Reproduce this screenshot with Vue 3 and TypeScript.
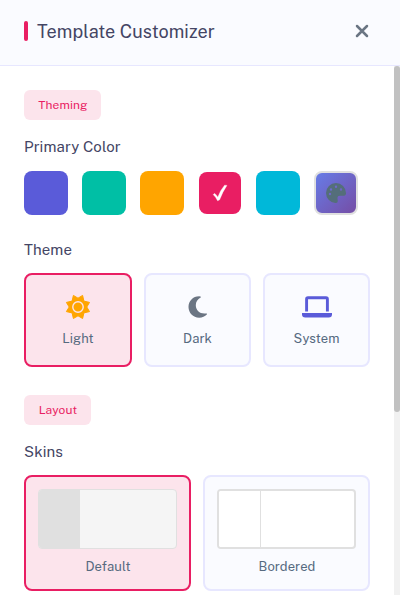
<script setup lang="ts">
import { ref } from 'vue'

interface Swatch {
  name: string
  color: string
}

const swatches: Swatch[] = [
  { name: 'indigo', color: '#5a5bd9' },
  { name: 'teal', color: '#00bfa5' },
  { name: 'orange', color: '#ffa500' },
  { name: 'pink', color: '#e91e63' },
  { name: 'cyan', color: '#00b8d9' },
]
const themes: string[] = ['Light', 'Dark', 'System']
const skins: string[] = ['Default', 'Bordered']

const primary = ref('pink')
const theme = ref('Light')
const skin = ref('Default')
</script>

<template>
  <div class="panel">
    <header class="header">
      <span class="accent"></span>
      <h1 class="title">Template Customizer</h1>
      <button class="close">
        <svg width="14" height="14" viewBox="0 0 14 14">
          <path d="M2 2 12 12M12 2 2 12" fill="none" stroke="#6a7583" stroke-width="2.5" stroke-linecap="round" />
        </svg>
      </button>
    </header>
    <div class="scroller">
      <main class="body">
        <span class="badge theming">Theming</span>
        <h2 class="label primary-label">Primary Color</h2>
        <div class="swatches">
          <button
            v-for="s in swatches"
            :key="s.name"
            class="swatch"
            :class="{ selected: primary === s.name }"
            :style="{ backgroundColor: s.color }"
            @click="primary = s.name"
          >
            <svg v-if="primary === s.name" width="16" height="18" viewBox="0 0 16 18">
              <path d="M1.2 10.6 2.7 9.4Q4.6 11 5.8 13.2Q8.2 6.4 12.6 1.2L14.9 1.4Q10.4 8 7.6 15.8L5.6 16.7Q4 13.2 1.2 10.6Z" fill="#fff" stroke="#fff" stroke-width=".4" stroke-linejoin="round" />
            </svg>
          </button>
          <button class="swatch custom">
            <svg width="20" height="20" viewBox="0 0 20 20">
              <path
                fill="#546e7a"
                fill-rule="evenodd"
                d="M10 0A10 10 0 0 0 0 10A10 10 0 0 0 9.2 20C11 20.2 12 19 11.7 17.4L11.5 15.5C11.4 13.5 12.2 12.7 14.2 12.8H18C19.5 12.8 20.1 11.5 20 10A10 10 0 0 0 10 0ZM4 9.8a1.2 1.2 0 1 0 0 2.4a1.2 1.2 0 0 0 0-2.4ZM5 5.3a1.2 1.2 0 1 0 0 2.4a1.2 1.2 0 0 0 0-2.4ZM10 2.5a1.2 1.2 0 1 0 0 2.4A1.2 1.2 0 0 0 10 2.5ZM15 5.3a1.2 1.2 0 1 0 0 2.4a1.2 1.2 0 0 0 0-2.4Z"
              />
            </svg>
          </button>
        </div>
        <h2 class="label theme-label">Theme</h2>
        <div class="themes">
          <button v-for="t in themes" :key="t" class="card theme-card" :class="{ active: theme === t }" @click="theme = t">
            <svg v-if="t === 'Light'" class="icon" width="28" height="28" viewBox="0 0 28 28">
              <path fill="#ffa500" stroke="#ffa500" stroke-width="1" stroke-linejoin="round" d="M14 5.2 18.6 2.4 19.9 8.1 25.5 9.4 22.8 14 25.5 18.6 19.9 19.9 18.6 25.5 14 22.8 9.4 25.5 8.1 19.9 2.4 18.6 5.2 14 2.4 9.4 8.1 8.1 9.4 2.4Z" />
              <circle cx="14" cy="14" r="5.2" fill="#ffa500" stroke="#fce4ec" stroke-width="1.4" />
            </svg>
            <svg v-else-if="t === 'Dark'" class="icon" width="28" height="28" viewBox="0 0 28 28">
              <path fill="#6b7583" d="M15.2 3.3C8.9 3.3 4.5 8.2 4.5 14S9 24.7 15.2 24.7C18.3 24.7 21 23.5 22.8 21.5C23.3 20.9 22.9 20.3 22.1 20.4C16.4 21.3 11.8 17.7 11.8 12.3C11.8 8.9 13.6 6.1 16.6 4.5C17.3 4.1 17.1 3.5 16.3 3.4Z" />
            </svg>
            <svg v-else class="icon" width="32" height="28" viewBox="0 0 32 28">
              <path d="M5.6 18.4V6.2Q5.6 4.8 7 4.8H25Q26.4 4.8 26.4 6.2V18.4" fill="none" stroke="#5a5bd9" stroke-width="2.9" />
              <path d="M1 20H31V21.2Q31 24.5 27.7 24.5H4.3Q1 24.5 1 21.2Z" fill="#5a5bd9" />
            </svg>
            <span class="name">{{ t }}</span>
          </button>
        </div>
        <span class="badge layout">Layout</span>
        <h2 class="label skins-label">Skins</h2>
        <div class="skins">
          <button v-for="s in skins" :key="s" class="card skin-card" :class="{ active: skin === s }" @click="skin = s">
            <span class="preview" :class="s.toLowerCase()"><span class="side"></span></span>
            <span class="name">{{ s }}</span>
          </button>
        </div>
      </main>
      <div class="track"><div class="thumb"></div></div>
    </div>
  </div>
</template>

<style>
body {
  overflow: hidden;
}
</style>

<style scoped>
* {
  box-sizing: border-box;
}
.panel {
  display: flex;
  flex-direction: column;
  width: 400px;
  height: 595px;
  overflow: hidden;
  background: #fff;
  font-family: "Public Sans", Inter, "Liberation Sans", sans-serif;
}
button {
  padding: 0;
  border: 0;
  font: inherit;
  background: transparent;
}
h1,
h2 {
  margin: 0;
  font-weight: 400;
}
.header {
  display: flex;
  flex: 0 0 66px;
  align-items: center;
  padding: 0 31px 4px 24px;
  border-bottom: 1px solid #e7e7ff;
  background: #fafbff;
}
.accent {
  width: 4px;
  height: 20px;
  margin-right: 9px;
  border-radius: 2px;
  background: #e91e63;
}
.title {
  flex: 1;
  padding-top: 2px;
  color: #444564;
  font-size: 18px;
  line-height: 28px;
  letter-spacing: 0.07px;
  white-space: nowrap;
}
.close {
  display: flex;
}
.scroller {
  display: flex;
  flex: 1;
  min-height: 0;
}
.body {
  display: flex;
  flex: 1;
  flex-direction: column;
  align-items: flex-start;
  padding: 24px;
}
.badge {
  flex: none;
  height: 30px;
  border-radius: 6px;
  background: #fce4ec;
  color: #e91e63;
  font-size: 12px;
  font-weight: 400;
  line-height: 30px;
  padding-left: 1px;
  letter-spacing: 0.1px;
  text-align: center;
}
.theming {
  width: 77px;
}
.layout {
  width: 67px;
  margin-top: 28px;
}
.label {
  height: 22px;
  color: #444564;
  font-size: 15px;
  line-height: 22px;
  letter-spacing: 0.1px;
}
.primary-label {
  margin: 16px 0 13px;
}
.theme-label {
  margin: 24px 0 12px;
}
.skins-label {
  margin: 16px 0 12px;
}
.swatches {
  display: flex;
  gap: 14px;
}
.swatch {
  display: flex;
  align-items: center;
  justify-content: center;
  width: 44px;
  height: 44px;
  border-radius: 8px;
}
.selected {
  width: 42px;
  height: 42px;
  margin: 1px;
}
.custom {
  border: 2px solid #e0e0e0;
  background: linear-gradient(135deg, #667eea, #764ba2) border-box;
}
.themes,
.skins {
  display: grid;
  flex: none;
  width: 100%;
  gap: 12px;
}
.themes {
  grid-template-columns: 108px 107px 107px;
}
.skins {
  grid-template-columns: repeat(2, 1fr);
}
.card {
  display: flex;
  flex-direction: column;
  align-items: center;
  border: 2px solid #e7e7ff;
  border-radius: 8px;
  background: #fafbff;
  color: #566a7f;
  font-size: 13px;
  letter-spacing: 0.07px;
}
.card.active {
  border-color: #e91e63;
  background: #fce4ec;
}
.theme-card {
  height: 94px;
  padding-top: 18px;
}
.skin-card {
  height: 116px;
  padding: 12px;
}
.icon {
  display: block;
}
.name {
  line-height: 20px;
}
.theme-card .name {
  margin-top: 8px;
}
.skin-card .name {
  margin-top: 8px;
  padding-left: 1px;
}
.preview {
  display: flex;
  flex: none;
  width: 100%;
  height: 60px;
  overflow: hidden;
  border: 1px solid #e0e0e0;
  border-radius: 4px;
  background: #f5f5f5;
}
.side {
  width: 30%;
  background: #e0e0e0;
}
.bordered {
  border-width: 2px;
  background: #fff;
}
.bordered .side {
  width: 42px;
  border-right: 1px solid #e0e0e0;
  background: #fff;
}
.track {
  flex: 0 0 6px;
  background: #f1f1f1;
}
.thumb {
  height: 346px;
  border-radius: 3px;
  background: #c1c1c1;
}
</style>
